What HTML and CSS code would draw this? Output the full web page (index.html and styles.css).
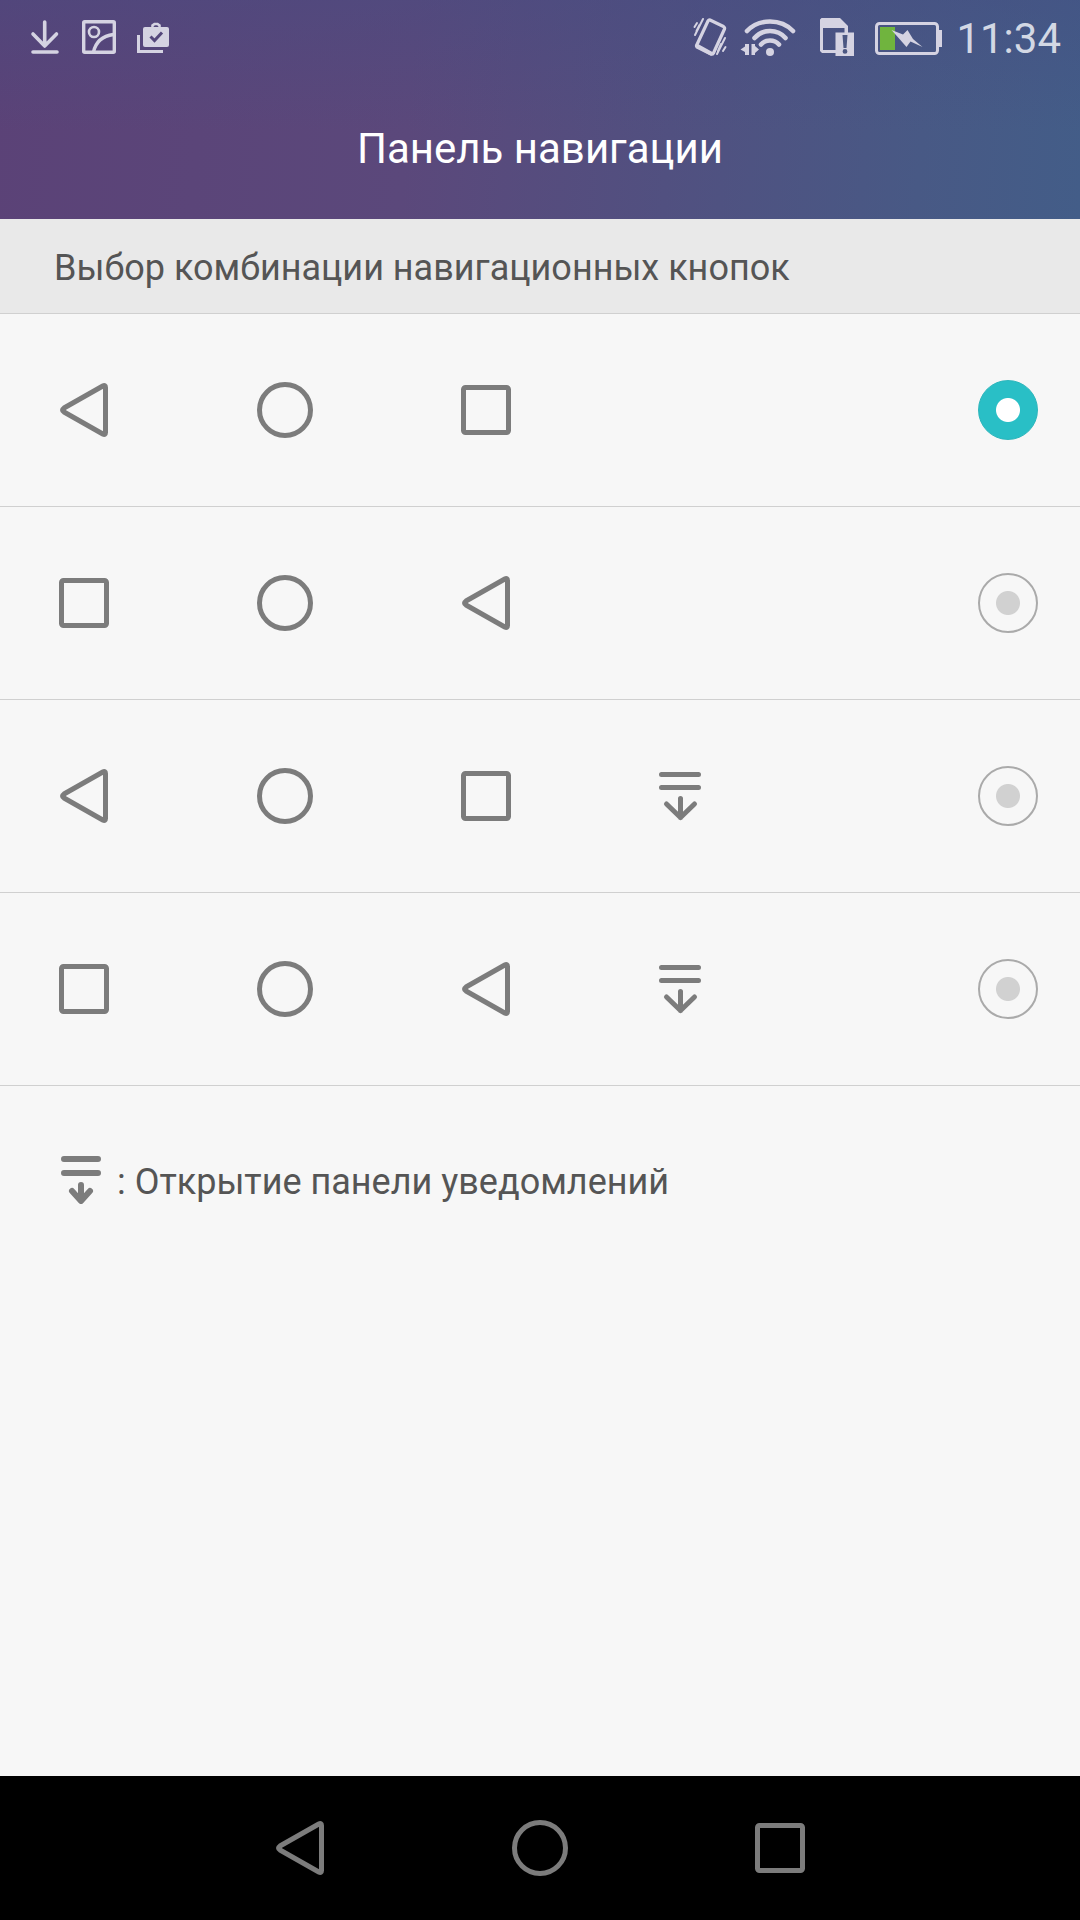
FILE: index.html
```html
<!DOCTYPE html>
<html lang="ru">
<head>
<meta charset="utf-8">
<meta name="viewport" content="width=device-width, initial-scale=1">
<title>Панель навигации</title>
<link rel="stylesheet" href="styles.css">
</head>
<body>
<svg class="sprite" aria-hidden="true">
  <symbol id="back" viewBox="0 0 72 72"><path d="M57.500 13.500v45q0 3-2.700 1.500L16 38q-3-2 0-4L54.800 12q2.700-1.500 2.700 1.500z"/></symbol>
  <symbol id="home" viewBox="0 0 72 72"><circle cx="36" cy="36" r="25.500"/></symbol>
  <symbol id="recent" viewBox="0 0 72 72"><rect x="13.500" y="13.500" width="45" height="45" rx="2"/></symbol>
  <symbol id="shade" viewBox="0 0 72 72"><path d="M17.500 14.500h37M17.500 27.500h37M36.500 38.500v19M22.500 44L36.500 57.500l14-13.500"/></symbol>
</svg>

<header class="header">
  <div class="status">
    <div class="notices">
      <svg class="small-icon" viewBox="27 19 36 36"><path class="line" stroke-width="3.600" d="M44.700 22v24M33 34l11.700 12L56.500 34M33 52h24"/></svg>
      <svg class="small-icon" viewBox="81 19 36 36"><g class="line" stroke-width="3.400"><rect x="83.700" y="21.700" width="30.600" height="30.600" rx="1"/><circle cx="94" cy="32" r="5" stroke-width="2.600"/><path d="M93.500 52c2-9 8-16 20-17.500"/></g></svg>
      <svg class="small-icon" viewBox="135 19 36 36"><path class="line flat" stroke-width="3" d="M138.500 35v16.500H163"/><rect class="solid" x="143" y="27" width="26" height="20" rx="2"/><path class="line flat" stroke-width="2.600" d="M152.500 28v-2.500l2-1.500h3l2 1.500V28"/><path class="mark" d="M150.500 36.500l4 4 7.500-8"/></svg>
    </div>
    <div class="system">
      <svg width="38" height="40" viewBox="690 17 38 40"><g class="line"><path stroke-width="3.200" d="M710 20l13.500 6.500q1.500 1 1 2.500L713.500 53q-1 1.500-2.500 1L697 47q-1-1 0-2.500L708 21q1-1.500 2-1z"/><path stroke-width="4" d="M697.500 46l13.500 7.500"/><path stroke-width="2" d="M697 23l-2.500 4M703 19l-8 16M699.500 25l-3 6M725 38l-8 16M721 44l-3 7M725.500 47l-2.500 4"/></g></svg>
      <svg width="56" height="40" viewBox="740 17 56 40"><path class="line" stroke-width="4.600" d="M747 31q9-9.500 23-9.500T793 31M754.500 38q6-7 15.500-7t15.500 7M761 44.500q3.500-4 9-4t9 4"/><circle class="solid" cx="770" cy="52" r="4"/><path class="solid" d="M749 44v11h-4v-3l-4.500-2.500 4.500-3V44zM751.500 44h3.500v2l4 3.500-4 3.500v2h-3.500z"/></svg>
      <svg width="54" height="40" viewBox="808 17 54 40"><path class="solid" fill-rule="evenodd" d="M821.500 18H840l8 8v6.500h6V56h-18.500v-3H822l-2-2V19.500zM823 28v22h12.500V32.500h9V28z"/><path class="mark-fill" d="M842.500 35h5l-1 13h-3zM845 49a2.400 2.400 0 1 1 0 4.800 2.400 2.400 0 0 1 0-4.800"/></svg>
      <svg width="70" height="40" viewBox="874 17 70 40"><rect class="line" stroke-width="3" x="876.500" y="23.500" width="61" height="30" rx="3"/><path class="solid" d="M938 30h4v17h-4z"/><path class="charge" d="M880 27h15v23h-15z"/><path class="solid" d="M891.500 30l11.500 4.500 4.500-4.500 5.500 9 9.500 8-12-5.500-4 5.500-7-8z"/></svg>
      <time class="clock">11:34</time>
    </div>
  </div>
  <h1 class="title">Панель навигации</h1>
</header>

<main class="content">
  <h2 class="section-title" id="section">Выбор комбинации навигационных кнопок</h2>
  <div role="radiogroup" aria-labelledby="section">
    <label class="option">
      <span class="keys"><svg class="key"><use href="#back"/></svg><svg class="key"><use href="#home"/></svg><svg class="key"><use href="#recent"/></svg></span>
      <input class="radio" type="radio" name="layout" aria-label="Назад, Домой, Недавние" checked>
    </label>
    <label class="option">
      <span class="keys"><svg class="key"><use href="#recent"/></svg><svg class="key"><use href="#home"/></svg><svg class="key"><use href="#back"/></svg></span>
      <input class="radio" type="radio" name="layout" aria-label="Недавние, Домой, Назад">
    </label>
    <label class="option">
      <span class="keys"><svg class="key"><use href="#back"/></svg><svg class="key"><use href="#home"/></svg><svg class="key"><use href="#recent"/></svg><svg class="key"><use href="#shade"/></svg></span>
      <input class="radio" type="radio" name="layout" aria-label="Назад, Домой, Недавние, Уведомления">
    </label>
    <label class="option">
      <span class="keys"><svg class="key"><use href="#recent"/></svg><svg class="key"><use href="#home"/></svg><svg class="key"><use href="#back"/></svg><svg class="key"><use href="#shade"/></svg></span>
      <input class="radio" type="radio" name="layout" aria-label="Недавние, Домой, Назад, Уведомления">
    </label>
  </div>
  <p class="legend">
    <svg class="legend-icon" viewBox="0 0 40 48"><path d="M3 3h34M3 17h34M20 29v14M11 35l9 10 9-10"/></svg>
    <span class="legend-text">: Открытие панели уведомлений</span>
  </p>
</main>

<nav class="navbar">
  <button class="nav-button" aria-label="Назад"><svg class="key"><use href="#back"/></svg></button>
  <button class="nav-button" aria-label="Домой"><svg class="key"><use href="#home"/></svg></button>
  <button class="nav-button" aria-label="Недавние"><svg class="key"><use href="#recent"/></svg></button>
</nav>
</body>
</html>
```
FILE: styles.css
```css
* { box-sizing: border-box; }

body {
  display: flex;
  flex-direction: column;
  min-height: 100vh;
  margin: 0;
  background: #f7f7f7;
  color: #555;
  font: 36px/48px Roboto, sans-serif;
}

svg { display: block; flex: none; }
.sprite { position: absolute; width: 0; height: 0; }

/* Header */
.header {
  background:
    linear-gradient(180deg, rgba(68, 76, 130, .4), rgba(68, 76, 130, 0) 60%),
    linear-gradient(95deg, #5b4277 0%, #5b487b 38%, #515080 62%, #485985 85%, #435d88 100%);
  color: #fff;
}

.status {
  display: flex;
  justify-content: space-between;
  align-items: center;
  height: 74px;
  padding: 0 19px 0 27px;
  color: #d5d3e2;
}

.notices { display: flex; gap: 18px; }
.small-icon { width: 36px; height: 36px; }
.system { display: flex; align-items: center; gap: 12px; }
.clock { padding-top: 4px; font-size: 42px; line-height: 48px; color: #d3d8e4; }

.line { fill: none; stroke: currentColor; stroke-linecap: round; stroke-linejoin: round; }
.flat { stroke-linecap: butt; stroke-linejoin: miter; }
.solid { fill: currentColor; }
.mark { fill: none; stroke: #54477b; stroke-width: 3; }
.mark-fill { fill: #4c5782; }
.charge { fill: #70b43e; }

.title {
  margin: 0;
  padding: 51px 0 46px;
  font-size: 42px;
  line-height: 48px;
  font-weight: 400;
  text-align: center;
}

/* Content */
.content { flex: 1; }

.section-title {
  margin: 0;
  padding: 25px 54px 21px;
  border-bottom: 1px solid #d0d0d0;
  background: #e9e9e9;
  color: #555;
  font-size: 36px;
  font-weight: 400;
}

.option {
  display: flex;
  justify-content: space-between;
  align-items: center;
  height: 193px;
  padding: 0 42px 0 48px;
  border-bottom: 1px solid #d0d0d0;
}

.keys { display: grid; grid-template-columns: 201px 201px 194px 72px; }

.key {
  width: 72px;
  height: 72px;
  fill: none;
  stroke: #7c7c7c;
  stroke-width: 5;
  stroke-linecap: round;
  stroke-linejoin: round;
}

.radio {
  appearance: none;
  flex: none;
  width: 60px;
  height: 60px;
  margin: 0;
  border: 2px solid #aaa;
  border-radius: 50%;
  background: radial-gradient(circle, #d1d1d1 11.5px, transparent 12.5px);
}

.radio:checked {
  border: 1px solid #2bb5bb;
  background: radial-gradient(circle, #fff 11.5px, #29bfc6 12.5px);
}

.legend {
  display: flex;
  align-items: flex-start;
  gap: 16px;
  margin: 0;
  padding: 70px 61px;
}

.legend-text { padding-top: 2px; }

.legend-icon {
  width: 40px;
  height: 48px;
  fill: none;
  stroke: #7c7c7c;
  stroke-width: 6;
  stroke-linecap: round;
  stroke-linejoin: round;
}

/* System navigation */
.navbar {
  display: grid;
  grid-template-columns: repeat(3, 240px);
  justify-content: center;
  height: 144px;
  background: #000;
}

.nav-button {
  display: grid;
  place-items: center;
  padding: 0;
  border: 0;
  background: none;
}
```
